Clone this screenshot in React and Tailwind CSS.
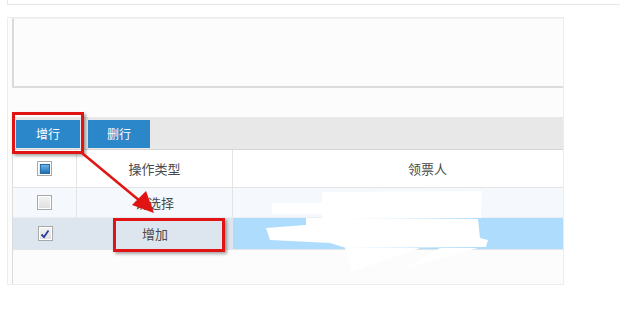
import React from "react";

const font = { fontFamily: '"Noto Sans CJK SC", "Noto Sans", sans-serif' };

function Box({ children, className = "" }) {
  return (
    <div
      className={
        "w-[15px] h-[15px] border border-[#a9a9a9] bg-gradient-to-b from-[#f4f4f4] to-[#dedede] flex items-center justify-center shadow-[inset_0_0_0_1px_#ffffff] " +
        className
      }
    >
      {children}
    </div>
  );
}

export default function App() {
  return (
    <div className="relative w-[620px] h-[309px] bg-white overflow-hidden text-[13px] text-[#4a4a4a]" style={font}>
      {/* top strip */}
      <div className="ml-[7px] h-[5px] border-l border-b border-[#e6e6e6] bg-white" />

      {/* outer panel */}
      <div className="mt-[12px] ml-[7px] w-[557px] h-[268px] border border-[#ededed] bg-[#fcfcfc] pl-[4px] flex flex-col">
        <div className="h-[70px] border-l-2 border-b-2 border-t border-l-[#dadada] border-b-[#dcdcdc] border-t-[#f0f0f0] bg-[#fcfcfc]" />
        <div className="h-[29px]" />
        {/* toolbar */}
        <div className="h-[33px] bg-[#e8e8e8] border-b border-[#d6d6d6] flex items-start pt-[3px] pl-[4px] gap-[8px]">
          <div className="w-[64px] h-[28px] bg-[#2b87c9] text-white flex items-center justify-center text-[12px]">增行</div>
          <div className="w-[62px] h-[28px] bg-[#2b87c9] text-white flex items-center justify-center text-[12px]">删行</div>
        </div>
        {/* table */}
        <div className="flex flex-col border-l border-[#dcdcdc]">
          <div className="h-[38px] flex bg-white border-b border-[#e4e4e4]">
            <div className="w-[64px] flex items-center justify-center border-r border-[#e4e4e4]">
              <Box>
                <div className="w-[10px] h-[10px] bg-gradient-to-b from-[#6ab4ec] to-[#1d6fb3] border border-[#2a6aa3]" />
              </Box>
            </div>
            <div className="w-[156px] flex items-center justify-center border-r border-[#e4e4e4]">操作类型</div>
            <div className="flex-1 flex items-center pl-[175px]">领票人</div>
          </div>
          <div className="h-[30px] flex bg-[#f5f8fc] border-b border-[#e8eef4]">
            <div className="w-[64px] flex items-center justify-center border-r border-[#e4e4e4]">
              <Box />
            </div>
            <div className="w-[156px] flex items-center justify-center border-r border-[#e4e4e4]">请选择</div>
            <div className="flex-1" />
          </div>
          <div className="h-[32px] flex border-b border-[#e4e4e4]">
            <div className="w-[64px] flex items-center justify-center bg-[#dde6ef]">
              <Box>
                <svg width="10" height="10" viewBox="0 0 10 10">
                  <path d="M1.5 5.5 L4 8 L8.5 1.5" fill="none" stroke="#2d3f9a" strokeWidth="1.8" />
                </svg>
              </Box>
            </div>
            <div className="w-[156px] flex items-center justify-center bg-[#dde6ef]">增加</div>
            <div className="flex-1 bg-[#aedcfc]" />
          </div>
        </div>
        <div className="flex-1 border-l border-[#dcdcdc]" />
      </div>

      {/* redaction scribbles */}
      <svg className="absolute left-0 top-0" width="620" height="309" viewBox="0 0 620 309">
        <g fill="#ffffff">
          <polygon points="322,192 482,191 481,218 322,219" />
          <polygon points="272,203 480,203 480,215 272,214" />
          <polygon points="306,218 478,219 480,238 488,240 486,247 346,248 330,243 270,240 266,228 306,225" />
          <polygon points="345,248 420,248 380,262 352,272" />
          <polygon points="440,248 478,248 405,268" />
        </g>
      </svg>

      {/* annotations */}
      <div className="absolute left-[12px] top-[112px] w-[72px] h-[42px] border-[3px] border-[#e11414] shadow-[2px_2px_3px_rgba(0,0,0,0.35)]" />
      <div className="absolute left-[113px] top-[218px] w-[112px] h-[34px] border-[3px] border-[#e11414] shadow-[2px_2px_3px_rgba(0,0,0,0.35)]" />
      <svg className="absolute left-0 top-0" width="620" height="309" viewBox="0 0 620 309">
        <line x1="82" y1="153" x2="146" y2="206" stroke="#e11414" strokeWidth="2.5" />
        <polygon points="154,213 132,205 146,191" fill="#e11414" />
      </svg>
    </div>
  );
}
